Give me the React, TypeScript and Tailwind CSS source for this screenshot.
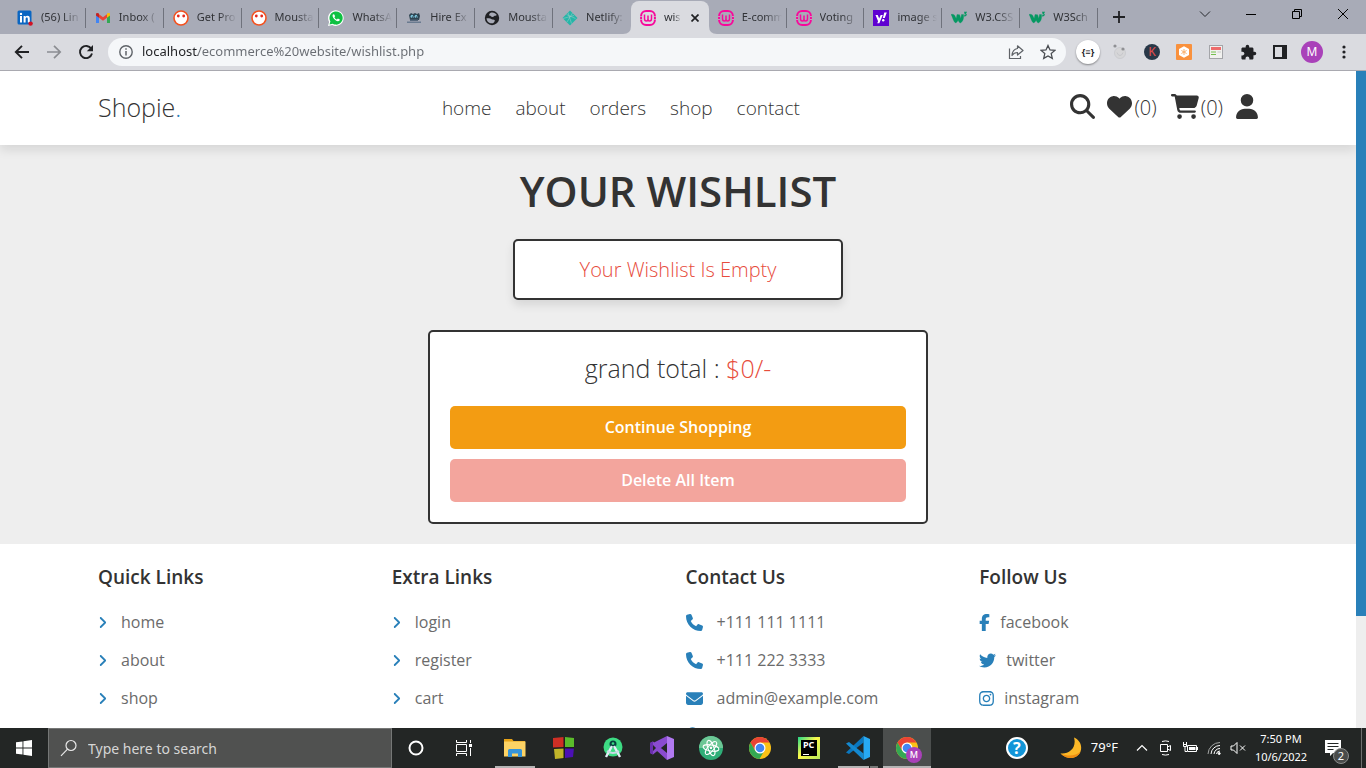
import type { ReactNode } from "react";
import {
  FaAngleRight,
  FaCartShopping,
  FaEnvelope,
  FaFacebookF,
  FaHeart,
  FaInstagram,
  FaLocationDot,
  FaMagnifyingGlass,
  FaPhone,
  FaTwitter,
  FaUser,
} from "react-icons/fa6";

/* ---------- Tab favicons ---------- */

const LinkedInIcon = () => (
  <svg viewBox="0 0 16 16" className="size-4">
    <rect x="0.5" y="0.5" width="14" height="14" rx="1.5" fill="#0a66c2" />
    <rect x="3" y="6" width="2" height="6.5" fill="#fff" />
    <circle cx="4" cy="3.9" r="1.2" fill="#fff" />
    <path d="M6.6 6h1.9v.9c.4-.7 1.1-1.1 2-1.1 1.8 0 2.3 1.1 2.3 2.9v3.8h-2V9c0-.9-.2-1.5-1-1.5-.9 0-1.2.7-1.2 1.5v3.5h-2z" fill="#fff" />
    <circle cx="13.6" cy="13.6" r="2.2" fill="#d11124" />
  </svg>
);

const GmailIcon = () => (
  <svg viewBox="0 0 16 16" className="size-4">
    <path d="M1 4v9h3V7z" fill="#4285f4" />
    <path d="M15 4v9h-3V7z" fill="#34a853" />
    <path d="M4 4.2 8 7.2l4-3v3.6l-4 3-4-3z" fill="#ea4335" />
    <path d="M1 4.4C1 2.700 2.700 2.500 4 3.600V7.800L1 5.600z" fill="#c5221f" />
    <path d="M15 4.400C15 2.700 13.300 2.500 12 3.600V7.800L15 5.600z" fill="#fbbc04" />
  </svg>
);

const FaceIcon = () => (
  <svg viewBox="0 0 16 16" className="size-4">
    <circle cx="8" cy="8" r="7" fill="#fff" stroke="#f4511e" strokeWidth="1.6" />
    <circle cx="5.300" cy="6" r="1.400" fill="#e5281d" />
    <circle cx="10.700" cy="6" r="1.400" fill="#e5281d" />
  </svg>
);

const WhatsAppIcon = () => (
  <svg viewBox="0 0 16 16" className="size-4">
    <path d="M0 16l1.100-4A7.800 7.800 0 1 1 4.200 15z" fill="#fff" />
    <path d="M1.500 14.500l.9-3.100A6.600 6.600 0 1 1 4.700 13.700z" fill="#0fc143" />
    <path d="M5.300 4.300c-1 .6-1 2 .1 3.700 1.200 1.900 3 3.200 4.600 3.300 1.100 0 1.900-.8 1.800-1.700l-1.900-1-1 1c-1.100-.4-2-1.300-2.500-2.400l.7-.9-.8-1.900z" fill="#fff" />
  </svg>
);

const HireIcon = () => (
  <svg viewBox="0 0 16 16" className="size-4">
    <path d="M3 5l2-2 2 1 2-1 2 1 2-1 1 3-1 4H4z" fill="#2f4552" />
    <circle cx="6.200" cy="6.400" r="1.700" fill="#7cc4dc" />
    <circle cx="10.200" cy="6.400" r="1.700" fill="#7cc4dc" />
    <path d="M6 8l2-3M10 8l2-3" stroke="#24313a" strokeWidth=".8" />
    <rect x="1" y="11.500" width="14" height="1.500" fill="#6a7b90" />
    <rect x="4" y="9.500" width="8" height="1.500" fill="#55677b" />
  </svg>
);

const GlobeIcon = () => (
  <svg viewBox="0 0 16 16" className="size-4">
    <circle cx="8" cy="8" r="7.200" fill="#202124" />
    <path d="M7.500 2.500c2.300-.3 4.300.8 5.300 2.500-.8 1-2 .3-2.800 1.300C9 7.500 7.400 6.800 6.600 6c-.8-.7-1.600-.2-1.500-1.200.2-1.200 1.300-2.100 2.400-2.300zM2.500 8.200c1.600.2 3.500-.2 4.700.7 1.300 1 2.600.2 3.400 1.200.6.8-.2 2.400-1.700 3.100-3.200.8-6.200-1.700-6.400-5z" fill="#a8abb7" />
  </svg>
);

const NetlifyIcon = () => (
  <svg viewBox="0 0 16 16" className="size-4">
    <path d="M8 .5 15.500 8 8 15.500.5 8z" fill="#25b6a8" />
    <path d="M4.500 4.500l9 4M1 8.500l11-3M6 2.500l3.500 11M10.500 3l-5.500 9" stroke="#a8c9cb" strokeWidth=".5" fill="none" />
  </svg>
);

const WampIcon = () => (
  <svg viewBox="0 0 16 16" className="size-4">
    <rect x="1.100" y="1.100" width="13.800" height="13.800" rx="5" fill="none" stroke="#f7099b" strokeWidth="2" />
    <path d="M4.500 4.500v4Q4.500 11 6.300 11 8 11 8 9V5.500M8 9q0 2 1.700 2 1.800 0 1.800-2.500v-4" fill="none" stroke="#f7099b" strokeWidth="1.500" />
    <path d="M0 6.500h2M0 9.500h2M14 6.500h2M14 9.500h2" stroke="#c9a4c0" strokeWidth=".9" />
  </svg>
);

const YahooIcon = () => (
  <svg viewBox="0 0 16 16" className="size-4">
    <rect width="16" height="16" fill="#5f01d1" />
    <path d="M2.500 5h2.200l1.500 3.600L7.700 5h2.100l-3.500 8.300H4.200l.9-2.100zM11.300 2.500h2.500L11.700 8H9.800z" fill="#fff" />
    <circle cx="10.200" cy="10.200" r="1.200" fill="#fff" />
  </svg>
);

const W3Icon = () => (
  <svg viewBox="0 0 16 16" className="size-4">
    <path d="M0 4.500C2.200 4 3.500 4.500 4.200 6.500L5.200 8.500l.8-4 2.600.2 1.200 3.800L10.500 4.500H12.500c.6 4-.8 7.500-3.200 8.500-1.200-.6-1.800-1.800-2.200-3-.4 1.200-1.200 2.400-2.500 3C2.200 11.500 1.800 7 0 4.500z" fill="#059862" stroke="#059862" strokeWidth=".3" />
    <path d="M13 2.200h2.200L14 3.800c1.800 0 1.700 2.400-1 2" fill="none" stroke="#059862" strokeWidth="1.100" />
  </svg>
);

type Tab = { title: string; icon: ReactNode; active?: boolean };

const tabs: Tab[] = [
  { title: "(56) Lin", icon: <LinkedInIcon /> },
  { title: "Inbox (", icon: <GmailIcon /> },
  { title: "Get Pro", icon: <FaceIcon /> },
  { title: "Mousta", icon: <FaceIcon /> },
  { title: "WhatsA", icon: <WhatsAppIcon /> },
  { title: "Hire Ex", icon: <HireIcon /> },
  { title: "Mousta", icon: <GlobeIcon /> },
  { title: "Netlify:", icon: <NetlifyIcon /> },
  { title: "wis", icon: <WampIcon />, active: true },
  { title: "E-comm", icon: <WampIcon /> },
  { title: "Voting", icon: <WampIcon /> },
  { title: "image s", icon: <YahooIcon /> },
  { title: "W3.CSS", icon: <W3Icon /> },
  { title: "W3Sch", icon: <W3Icon /> },
];

function TabItem({ tab, beforeActive }: { tab: Tab; beforeActive: boolean }) {
  if (tab.active) {
    return (
      <div className="relative flex h-full min-w-0 flex-1 items-center rounded-t-lg bg-[#dadbe0]">
        <svg viewBox="0 0 8 8" className="absolute bottom-0 -left-2 size-2">
          <path d="M8 0v8H0Q8 8 8 0z" fill="#dadbe0" />
        </svg>
        <svg viewBox="0 0 8 8" className="absolute -right-2 bottom-0 size-2">
          <path d="M0 0v8h8Q0 8 0 0z" fill="#dadbe0" />
        </svg>
        <button className="flex min-w-0 flex-1 items-center gap-2 pl-[9px]">
          <span className="shrink-0">{tab.icon}</span>
          <span className="min-w-0 flex-1 text-left whitespace-nowrap [mask-image:linear-gradient(90deg,#000_60%,transparent)]">
            {tab.title}
          </span>
        </button>
        <button aria-label="Close tab" className="flex w-7 justify-center">
          <svg viewBox="0 0 8 8" className="size-2">
            <path d="M.5.5l7 7M7.500.5l-7 7" stroke="#202124" strokeWidth="1.700" />
          </svg>
        </button>
      </div>
    );
  }
  return (
    <div className="flex h-full min-w-0 flex-1 items-center">
      <button className="flex min-w-0 flex-1 items-center gap-2 pr-1 pl-[9px]">
        <span className="shrink-0">{tab.icon}</span>
        <span className="min-w-0 flex-1 text-left whitespace-nowrap [mask-image:linear-gradient(90deg,#000_55%,transparent)]">
          {tab.title}
        </span>
      </button>
      <span className={beforeActive ? "w-px" : "h-5 w-px bg-[#6f727c]"} />
    </div>
  );
}

function TabBar() {
  return (
    <div className="flex h-[34px] shrink-0 items-stretch bg-[#a8abb7] pl-2 text-[11px] text-[#303236]">
      <div className="flex max-w-[1090px] min-w-0 flex-1 pt-px">
        {tabs.map((t, i) => (
          <TabItem key={i} tab={t} beforeActive={!!tabs[i + 1]?.active} />
        ))}
      </div>
      <button aria-label="New tab" className="ml-[11px] flex w-5 items-center justify-center">
        <svg viewBox="0 0 12 12" className="size-3">
          <path d="M6 0v12M0 6h12" stroke="#202124" strokeWidth="1.800" />
        </svg>
      </button>
      <div className="ml-auto flex h-7">
        <button aria-label="Search tabs" className="flex w-[46px] items-center justify-center">
          <svg viewBox="0 0 12 12" className="size-3">
            <path d="M1 3.500l5 5 5-5" stroke="#26282c" fill="none" />
          </svg>
        </button>
        <button aria-label="Minimize" className="flex w-[46px] items-center justify-center">
          <svg viewBox="0 0 10 10" className="size-[10px]">
            <path d="M0 5.500h10" stroke="#000" />
          </svg>
        </button>
        <button aria-label="Restore" className="flex w-[46px] items-center justify-center">
          <svg viewBox="0 0 10 10" className="size-[10px]">
            <path d="M.5 2.500h7v7h-7zM2.500 2.500v-2h7v7h-2" stroke="#000" fill="none" />
          </svg>
        </button>
        <button aria-label="Close" className="flex w-[46px] items-center justify-center">
          <svg viewBox="0 0 10 10" className="size-[10px]">
            <path d="M0 0l10 10M10 0L0 10" stroke="#000" />
          </svg>
        </button>
      </div>
    </div>
  );
}

/* ---------- Address bar ---------- */

function ToolButton({ label, children }: { label: string; children: ReactNode }) {
  return (
    <button aria-label={label} className="flex size-8 shrink-0 items-center justify-center">
      {children}
    </button>
  );
}

function Toolbar() {
  return (
    <div className="flex h-[37px] shrink-0 items-center border-b border-[#a9a9b0] bg-[#dadbe0] px-[6px]">
      <ToolButton label="Back">
        <svg viewBox="0 0 16 16" className="size-4">
          <path d="M15 8H2M8 1.800L1.800 8 8 14.200" stroke="#202124" strokeWidth="1.900" fill="none" />
        </svg>
      </ToolButton>
      <ToolButton label="Forward">
        <svg viewBox="0 0 16 16" className="size-4">
          <path d="M1 8h13M8 1.800L14.200 8 8 14.200" stroke="#8b8d92" strokeWidth="1.700" fill="none" />
        </svg>
      </ToolButton>
      <ToolButton label="Reload">
        <svg viewBox="0 0 16 16" className="size-4">
          <path d="M13.300 4.800A6.100 6.100 0 1 0 14 9.600" stroke="#202124" strokeWidth="1.900" fill="none" />
          <path d="M15 1v6.200H8.800z" fill="#202124" />
        </svg>
      </ToolButton>
      <div className="mx-[6px] flex h-7 min-w-0 flex-1 items-center rounded-full bg-[#f5f7f9] pr-[10px] pl-[11px]">
        <svg viewBox="0 0 14 14" className="size-[14px] shrink-0">
          <circle cx="7" cy="7" r="6.200" fill="none" stroke="#5f6368" strokeWidth="1.400" />
          <path d="M7 6v4.500M7 3.300v1.500" stroke="#5f6368" strokeWidth="1.500" />
        </svg>
        <input
          aria-label="Address"
          defaultValue="localhost/ecommerce%20website/wishlist.php"
          className="ml-[9px] min-w-0 flex-1 bg-[linear-gradient(90deg,#202124_56px,#696d73_56px)] bg-clip-text text-[13px] text-transparent outline-none"
        />
        <div className="flex items-center gap-4">
          <svg viewBox="0 0 16 16" className="size-4">
            <path d="M1.500 4.500v10h11V12" fill="none" stroke="#5f6368" strokeWidth="1.200" />
            <path d="M9.500 1.800L15 6.500 9.500 11V8.500C7 8.500 5.300 9.500 4 11.500 4.300 7.500 6 5 9.500 4.500z" fill="none" stroke="#5f6368" strokeWidth="1.200" strokeLinejoin="round" />
          </svg>
          <svg viewBox="0 0 16 16" className="size-4">
            <path d="M8 1.500l2 4.500 4.900.4-3.700 3.200 1.100 4.800L8 11.900l-4.300 2.500 1.100-4.800L1.100 6.400 6 6z" fill="none" stroke="#4a4d52" strokeWidth="1.300" />
          </svg>
        </div>
      </div>
      <ToolButton label="JSON viewer">
        <span className="flex size-6 items-center justify-center rounded-full bg-white text-[9px] font-bold text-[#202124] shadow-[0_1px_2px_rgba(0,0,0,0.4)]">
          {"{≡}"}
        </span>
      </ToolButton>
      <ToolButton label="Extension">
        <svg viewBox="0 0 16 16" className="size-4">
          <circle cx="8" cy="9" r="5.500" fill="#d6d6d8" stroke="#cbccd0" />
          <path d="M5 8.500q1 3 3 3t3-3" stroke="#c6c7cb" fill="none" />
          <circle cx="3" cy="2" r="1.600" fill="#8f9094" />
          <circle cx="11" cy="5" r="1.600" fill="#8f9094" />
        </svg>
      </ToolButton>
      <ToolButton label="Keyboard extension">
        <span className="flex size-4 items-center justify-center rounded-full bg-[#283848] text-[12px] font-medium text-[#d94b4b]">K</span>
      </ToolButton>
      <ToolButton label="Honey extension">
        <svg viewBox="0 0 16 16" className="size-4">
          <rect width="16" height="16" rx="1" fill="#f9913d" />
          <path d="M8 2.200l5 2.900v5.800l-5 2.900-5-2.900V5.100z" fill="#fff" />
          <path d="M8 5v6M5.400 6.500l5.200 3M10.600 6.500l-5.200 3" stroke="#f9b06d" strokeWidth="1" />
        </svg>
      </ToolButton>
      <ToolButton label="Page notes">
        <svg viewBox="0 0 16 16" className="size-4">
          <rect x="1.500" y="1.500" width="13" height="13" fill="#f1f1ef" stroke="#a4a5a9" />
          <rect x="3" y="3" width="10" height="3" fill="#ee6c6c" />
          <path d="M3 8h5M3 10.500h5" stroke="#76c04f" />
          <path d="M9.500 8H13" stroke="#c8c8c8" />
        </svg>
      </ToolButton>
      <ToolButton label="Extensions">
        <svg viewBox="0 0 24 24" className="size-[17px]">
          <path d="M20.500 11H19V7c0-1.100-.9-2-2-2h-4V3.500a2.500 2.500 0 0 0-5 0V5H4c-1.100 0-1.990.9-1.990 2v3.800H3.500c1.490 0 2.700 1.210 2.700 2.700s-1.210 2.700-2.700 2.700H2V20c0 1.100.9 2 2 2h3.800v-1.500c0-1.490 1.210-2.700 2.700-2.700 1.490 0 2.700 1.210 2.700 2.700V22H17c1.100 0 2-.9 2-2v-4h1.500a2.500 2.500 0 0 0 0-5z" fill="#202124" />
        </svg>
      </ToolButton>
      <ToolButton label="Side panel">
        <svg viewBox="0 0 14 14" className="size-[14px]">
          <path d="M1 1h12v12H1z" fill="none" stroke="#202124" strokeWidth="2" />
          <rect x="9" y="1" width="4" height="12" fill="#202124" />
        </svg>
      </ToolButton>
      <ToolButton label="Profile">
        <span className="flex size-[22px] items-center justify-center rounded-full bg-[#a941b9] text-[12px] text-white">M</span>
      </ToolButton>
      <ToolButton label="Menu">
        <svg viewBox="0 0 4 14" className="h-[14px] w-1">
          <circle cx="2" cy="2" r="1.600" fill="#202124" />
          <circle cx="2" cy="7" r="1.600" fill="#202124" />
          <circle cx="2" cy="12" r="1.600" fill="#202124" />
        </svg>
      </ToolButton>
    </div>
  );
}

/* ---------- Shop page ---------- */

function ShopHeader() {
  return (
    <header className="relative bg-white shadow-[0_5px_10px_rgba(0,0,0,0.1)]">
      <div className="mx-auto flex h-[74px] max-w-[1200px] items-center justify-between px-5">
        <a href="#" className="text-[25px] text-[#333]">
          Shopie<span className="text-[#2980b9]">.</span>
        </a>
        <nav className="flex gap-6 pt-px pr-[10px] text-[19px] text-[#333]">
          <a href="#">home</a>
          <a href="#">about</a>
          <a href="#">orders</a>
          <a href="#">shop</a>
          <a href="#">contact</a>
        </nav>
        <div className="flex items-start text-[20px] leading-[28px] text-[#333]">
          <a href="#" aria-label="Search">
            <FaMagnifyingGlass className="size-[25px]" />
          </a>
          <a href="#" aria-label="Wishlist" className="ml-3 flex gap-[2px]">
            <FaHeart className="size-[25px]" />
            <span>(0)</span>
          </a>
          <a href="#" aria-label="Cart" className="ml-[14px] flex gap-[2px]">
            <FaCartShopping className="h-[25px] w-7" />
            <span>(0)</span>
          </a>
          <a href="#" aria-label="Account" className="ml-[13px]">
            <FaUser className="h-[25px] w-[22px]" />
          </a>
        </div>
      </div>
    </header>
  );
}

function Wishlist() {
  return (
    <main className="flex flex-col items-center p-5">
      <h1 className="mb-[22px] text-[42px] leading-[52px] font-semibold text-[#333]">YOUR WISHLIST</h1>
      <p className="mb-[30px] w-full max-w-[330px] rounded-[5px] border-2 border-[#333] bg-white p-[15px] text-center text-[20px] leading-[27px] text-[#e74c3c] shadow-[0_5px_10px_rgba(0,0,0,0.1)]">
        Your Wishlist Is Empty
      </p>
      <section className="w-full max-w-[500px] rounded-[5px] border-2 border-[#333] bg-white p-5 text-center">
        <p className="mb-[22px] text-[25px] leading-[32px] text-[#333]">
          grand total : <span className="text-[#e74c3c]">$0/-</span>
        </p>
        <a href="#" className="block rounded-[5px] bg-[#f39c12] py-[10px] text-[16px] leading-[23px] font-semibold text-white">
          Continue Shopping
        </a>
        <button disabled className="mt-[10px] block w-full rounded-[5px] bg-[#f3a59d] py-[10px] text-[16px] leading-[23px] font-semibold text-white">
          Delete All Item
        </button>
      </section>
    </main>
  );
}

function FooterLink({ icon, wide, children }: { icon: ReactNode; wide?: boolean; children: ReactNode }) {
  return (
    <li>
      <a href="#" className={`flex h-[38px] items-center text-[16px] font-normal text-[#6b6b6b] ${wide ? "gap-[14px]" : "gap-[10px]"}`}>
        <span className="text-[#2980b9]">{icon}</span>
        {children}
      </a>
    </li>
  );
}

function FooterColumn({ title, children }: { title: string; children: ReactNode }) {
  return (
    <div>
      <h2 className="mb-3 text-[19px] leading-[27px] font-semibold text-[#333]">{title}</h2>
      <ul>{children}</ul>
    </div>
  );
}

function ShopFooter() {
  const angle = <FaAngleRight className="h-[19px] w-[9px]" />;
  return (
    <footer className="bg-white">
      <div className="mx-auto grid max-w-[1200px] grid-cols-4 gap-[15px] p-5">
        <FooterColumn title="Quick Links">
          <FooterLink wide icon={angle}>home</FooterLink>
          <FooterLink wide icon={angle}>about</FooterLink>
          <FooterLink wide icon={angle}>shop</FooterLink>
        </FooterColumn>
        <FooterColumn title="Extra Links">
          <FooterLink wide icon={angle}>login</FooterLink>
          <FooterLink wide icon={angle}>register</FooterLink>
          <FooterLink wide icon={angle}>cart</FooterLink>
        </FooterColumn>
        <FooterColumn title="Contact Us">
          <FooterLink wide icon={<FaPhone className="size-[17px]" />}>+111 111 1111</FooterLink>
          <FooterLink wide icon={<FaPhone className="size-[17px]" />}>+111 222 3333</FooterLink>
          <FooterLink wide icon={<FaEnvelope className="size-[17px]" />}>admin@example.com</FooterLink>
          <li className="flex h-[38px] items-center text-[#2980b9]">
            <FaLocationDot className="h-[18px] w-[13px]" />
          </li>
        </FooterColumn>
        <FooterColumn title="Follow Us">
          <FooterLink icon={<FaFacebookF className="h-[17px] w-[11px]" />}>facebook</FooterLink>
          <FooterLink icon={<FaTwitter className="size-[17px]" />}>twitter</FooterLink>
          <FooterLink icon={<FaInstagram className="h-[17px] w-[15px]" />}>instagram</FooterLink>
        </FooterColumn>
      </div>
    </footer>
  );
}

/* ---------- Taskbar ---------- */

const ExplorerIcon = () => (
  <svg viewBox="0 0 24 24" className="size-6">
    <path d="M1 3h8l1.500 2H22v4H1z" fill="#e8a317" />
    <rect x="1" y="5.500" width="21.500" height="15" fill="#fdd365" />
    <path d="M5 21v-6.500q0-1.500 1.500-1.500h11q1.500 0 1.500 1.500V21h-4v-3.500H9V21z" fill="#3694d9" />
  </svg>
);

const CubesIcon = () => (
  <svg viewBox="0 0 24 24" className="size-6">
    <path d="M1 2l11-1v10L1 12z" fill="#cf2f25" />
    <path d="M13 1l9 1v9h-9z" fill="#5bbb2b" />
    <path d="M2 13l10-1v10l-9 1z" fill="#c1b52a" />
    <path d="M13 12h9l-1 9-8 1z" fill="#4c10b5" />
    <path d="M12 1v22M1 12h21" stroke="#1a1a1a" />
  </svg>
);

const AndroidStudioIcon = () => (
  <svg viewBox="0 0 24 24" className="size-6">
    <circle cx="12" cy="11" r="9.500" fill="#3ddc84" />
    <circle cx="12" cy="8" r="3.500" fill="#07403e" />
    <circle cx="12" cy="7.500" r="1.300" fill="#3ddc84" />
    <path d="M11 10L5 21M13 10l6 11" stroke="#e3eef6" strokeWidth="2.400" />
    <path d="M6 15q6 4 12 0" stroke="#c9d9e6" strokeWidth="1.800" fill="none" />
  </svg>
);

const VisualStudioIcon = () => (
  <svg viewBox="0 0 24 24" className="size-6">
    <path d="M17 0l7 3v18l-7 3z" fill="#b179f1" />
    <path d="M17 0v7L3 18.500 0 17V7l3-1.500L17 17v7L0 8.500z" fill="#8a4bd0" />
    <path d="M0 7l3-1.500V18.500L0 17z" fill="#6a2fae" />
    <path d="M3 9v6l3-3z" fill="#232625" />
  </svg>
);

const AtomIcon = () => (
  <svg viewBox="0 0 24 24" className="size-6">
    <circle cx="12" cy="12" r="12" fill="#2fae78" />
    <path d="M12 0a12 12 0 0 1 12 12H0A12 12 0 0 1 12 0z" fill="#6cc795" />
    <g fill="none" stroke="#fff" strokeWidth="1">
      <ellipse cx="12" cy="12" rx="8" ry="3" transform="rotate(10 12 12)" />
      <ellipse cx="12" cy="12" rx="8" ry="3" transform="rotate(70 12 12)" />
      <ellipse cx="12" cy="12" rx="8" ry="3" transform="rotate(130 12 12)" />
    </g>
    <circle cx="12" cy="12" r="1.200" fill="#fff" />
  </svg>
);

const ChromeIcon = () => (
  <svg viewBox="0 0 24 24" className="size-6">
    <circle cx="12" cy="12" r="11" fill="#fbc116" />
    <path d="M2.500 6.500A11 11 0 0 1 21.500 6.500H12L7.200 14.800z" fill="#ea4335" />
    <path d="M2.500 6.500A11 11 0 0 0 11.500 23l4.800-8.300L7.200 14.800z" fill="#34a853" />
    <circle cx="12" cy="12" r="5.500" fill="#fff" />
    <circle cx="12" cy="12" r="4.300" fill="#4285f4" />
  </svg>
);

const PyCharmIcon = () => (
  <span className="flex size-[22px] items-center justify-center bg-[linear-gradient(135deg,#21d789,#fcf84a_45%,#b7e85a)]">
    <span className="flex size-4 flex-col justify-between bg-black pl-[2px] text-left">
      <span className="text-[9px] leading-[10px] font-bold text-white">PC</span>
      <span className="mb-px h-px w-[6px] bg-white" />
    </span>
  </span>
);

const CodeIcon = () => (
  <svg viewBox="0 0 24 24" className="size-6">
    <path d="M17.500 0v6.500L3 18 0 16.500z" fill="#0a77bf" />
    <path d="M0 7.500L3 6l14.500 11.500V24z" fill="#1489d0" />
    <path d="M17.500 0L24 3v18l-6.500 3z" fill="#27a9f3" />
  </svg>
);

type TaskButtonProps = {
  label: string;
  children: ReactNode;
  running?: boolean;
  stacked?: boolean;
  active?: boolean;
};

function TaskButton({ label, children, running, stacked, active }: TaskButtonProps) {
  return (
    <button
      aria-label={label}
      className={`relative flex w-12 items-center justify-center ${active ? "bg-[#4b4e4d]" : ""}`}
    >
      {children}
      {running && <span className="absolute inset-x-1 bottom-0 h-[2px] bg-[#b4b4b4]" />}
      {stacked && (
        <span className="absolute inset-x-1 bottom-0 flex h-[2px] gap-px">
          <span className="flex-1 bg-[#b4b4b4]" />
          <span className="w-2 bg-[#767877]" />
        </span>
      )}
      {active && <span className="absolute inset-x-0 bottom-0 h-[2px] bg-[#b4b4b4]" />}
    </button>
  );
}

function Taskbar() {
  return (
    <div className="flex h-10 shrink-0 items-stretch bg-[#232625] text-white">
      <button aria-label="Start" className="flex w-12 items-center justify-center">
        <svg viewBox="0 0 16 16" className="size-4">
          <path d="M0 2.300l6.500-.9v6.100H0zM7.400 1.200L16 0v7.500H7.400zM0 8.400h6.500v6.200L0 13.700zM7.400 8.400H16V16l-8.600-1.200z" fill="#fff" />
        </svg>
      </button>
      <label className="flex w-[344px] items-center border border-[#757776] bg-[#505150] pl-[11px]">
        <svg viewBox="0 0 18 18" className="size-[18px] shrink-0">
          <circle cx="11" cy="6.500" r="5" fill="none" stroke="#e8e8e8" strokeWidth="1.200" />
          <path d="M7.500 10.200L1 16.800" stroke="#e8e8e8" strokeWidth="1.200" />
        </svg>
        <input
          aria-label="Search"
          placeholder="Type here to search"
          className="ml-[10px] min-w-0 flex-1 bg-transparent text-[14px] outline-none placeholder:text-[#d6d6d6]"
        />
      </label>
      <TaskButton label="Cortana">
        <svg viewBox="0 0 16 16" className="size-4">
          <circle cx="8" cy="8" r="6.500" fill="none" stroke="#fff" strokeWidth="2" />
        </svg>
      </TaskButton>
      <TaskButton label="Task view">
        <svg viewBox="0 0 16 16" className="size-4" fill="none" stroke="#fff">
          <path d="M.5 0v2.500h10V0M.5 16v-2.500h10V16M.5 4.500h10v7H.5zM14.500 0v3M14.500 8v8" />
          <path d="M13 4h3v3h-3z" fill="#fff" stroke="none" />
        </svg>
      </TaskButton>
      <div className="ml-[3px] flex gap-px">
        <TaskButton label="File Explorer" running>
          <ExplorerIcon />
        </TaskButton>
        <TaskButton label="Cubes">
          <CubesIcon />
        </TaskButton>
        <TaskButton label="Android Studio">
          <AndroidStudioIcon />
        </TaskButton>
        <TaskButton label="Visual Studio">
          <VisualStudioIcon />
        </TaskButton>
        <TaskButton label="Atom">
          <AtomIcon />
        </TaskButton>
        <TaskButton label="Chrome">
          <ChromeIcon />
        </TaskButton>
        <TaskButton label="PyCharm">
          <PyCharmIcon />
        </TaskButton>
        <TaskButton label="Visual Studio Code" stacked>
          <CodeIcon />
        </TaskButton>
        <TaskButton label="Chrome window" active>
          <span className="relative">
            <ChromeIcon />
            <span className="absolute -right-[3px] -bottom-[3px] flex size-4 items-center justify-center rounded-full bg-[#a941b9] text-[9px] font-medium">
              M
            </span>
          </span>
        </TaskButton>
      </div>
      <div className="ml-auto flex items-center">
        <button aria-label="Help" className="flex size-[22px] items-center justify-center rounded-full border-2 border-white bg-[#1295d8] text-[16px] font-bold">
          ?
        </button>
        <button className="ml-8 flex items-center gap-[9px] text-[13px]">
          <svg viewBox="0 0 22 22" className="size-[22px]">
            <path d="M14 .5c6 2.500 8.500 8.500 6.500 14C18 21.500 8 24 .5 16.500 9 17.500 17 11 14 .5z" fill="#fdb827" />
            <path d="M.5 16.500C8 24 18 21.500 20.500 14.500 16 19 8 20 .5 16.500z" fill="#f08c12" />
          </svg>
          79°F
        </button>
        <button aria-label="Show hidden icons" className="ml-3 flex w-6 justify-center">
          <svg viewBox="0 0 12 8" className="h-2 w-3">
            <path d="M1 6.500l5-5 5 5" fill="none" stroke="#fff" strokeWidth="1.200" />
          </svg>
        </button>
        <button aria-label="Meet now" className="flex w-6 justify-center">
          <svg viewBox="0 0 14 16" className="h-4 w-[14px]" fill="none" stroke="#fff">
            <path d="M3 1.500q3.500-1.200 7 0M3 14.500q3.500 1.200 7 0M1.500 4.500h7v7h-7zM8.500 7l3-1.500v5L8.500 9" />
          </svg>
        </button>
        <button aria-label="Battery" className="flex w-6 justify-center">
          <svg viewBox="0 0 16 12" className="h-3 w-4" fill="none" stroke="#fff">
            <path d="M5.500 3.500h9v6h-9zM15.500 5v3M1 2.500h4M1.500 0v2.500M4.500 0v2.500M1.500 2.500v2h3v-2M3 5v4.500h2" />
            <path d="M7 5h6.500v3H7z" fill="#fff" stroke="none" />
          </svg>
        </button>
        <button aria-label="Network" className="flex w-6 justify-center">
          <svg viewBox="0 0 14 14" className="size-[14px]" fill="none" stroke="#fff">
            <path d="M1 13A12 12 0 0 1 13 1.500" stroke="#a5a7a6" />
            <path d="M4 13a9 9 0 0 1 9-8.500M7 13a6 6 0 0 1 6-5.500M9.500 13a3.500 3.500 0 0 1 3.500-3" />
            <circle cx="12.200" cy="12.500" r="1" fill="#fff" />
          </svg>
        </button>
        <button aria-label="Volume muted" className="flex w-6 justify-center">
          <svg viewBox="0 0 16 14" className="h-[14px] w-4" fill="none" stroke="#fff">
            <path d="M1 5h2.500L7 1.500v11L3.500 9H1zM10 4.500l5 5M15 4.500l-5 5" />
          </svg>
        </button>
        <button className="flex w-[62px] flex-col items-center text-[11px] leading-[18px]">
          <span>7:50 PM</span>
          <span>10/6/2022</span>
        </button>
        <button aria-label="Notifications" className="relative ml-[3px] flex w-9 justify-center">
          <svg viewBox="0 0 16 16" className="size-4">
            <path d="M0 0h16v13H8l-3 3v-3H0z" fill="#fff" />
            <path d="M2.500 3.500h11M2.500 6.500h11M2.500 9.500h6" stroke="#232625" />
          </svg>
          <span className="absolute right-[2px] -bottom-2 flex size-4 items-center justify-center rounded-full border border-[#8b8d8c] bg-[#4a4c4b] text-[11px]">
            2
          </span>
        </button>
        <span className="ml-[10px] h-10 w-[5px] border-l border-[#6d6f6e]" />
      </div>
    </div>
  );
}

export default function App() {
  return (
    <div className="flex h-screen flex-col overflow-hidden font-['Noto_Sans',sans-serif]">
      <TabBar />
      <Toolbar />
      <div className="flex min-h-0 flex-1 bg-[#eee] font-['Open_Sans',sans-serif] font-light">
        <div className="min-w-0 flex-1 overflow-hidden">
          <ShopHeader />
          <Wishlist />
          <ShopFooter />
        </div>
        <div className="w-[10px] shrink-0">
          <div className="h-[83%] bg-[#2980b9]" />
        </div>
      </div>
      <Taskbar />
    </div>
  );
}
